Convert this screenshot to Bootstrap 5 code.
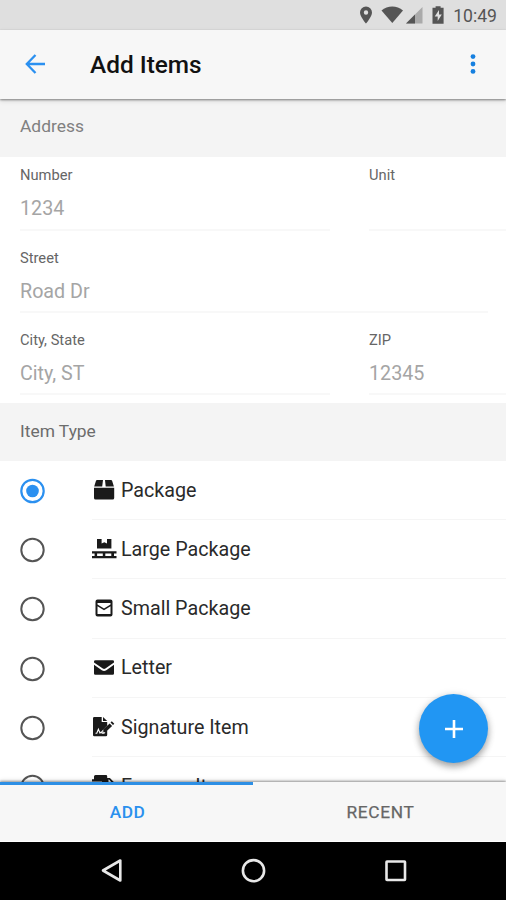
<!DOCTYPE html>
<html lang="en">
<head>
<meta charset="utf-8">
<meta name="viewport" content="width=device-width, initial-scale=1">
<title>Add Items</title>
<link href="https://cdn.jsdelivr.net/npm/bootstrap@5.3.0/dist/css/bootstrap.min.css" rel="stylesheet">
<style>
  body { font-family: Roboto, "Liberation Sans", sans-serif; color: #222; line-height: 1.2; }
  svg { display: block; flex: none; }
  .screen { height: 900px; }
  .status-bar { height: 30px; background: #dfdfdf; color: #555; font-size: 17.6px; padding: 3px 9px 0 0; }
  .status-bar svg { margin-top: -3px; }
  .app-bar { height: 69px; background: #f7f7f7; padding: 0 20px 2px 24px; box-shadow: 0 1px 2px rgba(0,0,0,.42), 0 2px 5px rgba(0,0,0,.12); z-index: 2; }
  .app-title { font-size: 24.4px; font-weight: 500; color: #111; margin-left: 43px; padding-top: 2px; }
  .section-head { height: 58px; background: #f4f4f4; color: #808080; font-size: 17.4px; padding: 0 20px 4px; }
  .section-head.type-head { color: #6c6c6c; padding-bottom: 1px; }
  .address-form { height: 246px; padding-left: 20px; }
  .field-row { height: 82px; }
  .field-box { height: 74px; border-bottom: 2px solid #f8f8f8; padding-top: 9px; }
  .field-row + .field-row .field-box { height: 73.500px; padding-top: 10px; }
  .field-box label { font-size: 14.7px; color: #666; line-height: 18px; display: block; }
  .field-box input { font-size: 19.7px; line-height: 24px; height: 24px; margin-top: 13px; }
  .field-box input::placeholder { color: #a5a5a5; opacity: 1; }
  .w-main { width: 310px; }
  .gap-fields { gap: 39px; }
  .w-street { width: 468px; }
  .item-row { height: 59.2px; padding-left: 20px; }
  .item-body { height: 59.2px; margin-left: 46px; border-bottom: 1.6px solid #f5f5f5; font-size: 19.7px; color: #2a2a2a; gap: 4px; }
  .item-row > svg { margin-top: 1px; }
  .item-body span { padding-top: 1px; }
  .tab-bar { height: 60px; background: #f7f7f7; font-size: 17.3px; font-weight: 500; letter-spacing: .5px; color: #666; box-shadow: 0 -1px 2px rgba(0,0,0,.35), 0 -2px 4px rgba(0,0,0,.1); z-index: 2; border-bottom: 1px solid #fff; }
  .tab-bar button { color: inherit; font: inherit; letter-spacing: inherit; padding: 0 0 0 2px; }
  .tab-bar .tab-on { color: #2a90ee; border-top: 3px solid #2d8fe5 !important; padding-bottom: 2px; }
  .tab-bar .tab-off { font-weight: 400; letter-spacing: .7px; padding-top: 1px; -webkit-text-stroke: .25px #666; }
  .sys-nav { height: 58px; background: #000; }
  .fab { right: 18px; bottom: 19px; width: 69px; height: 69px; background: #2196f3; box-shadow: 0 4px 7px rgba(0,0,0,.3), 0 1px 9px rgba(0,0,0,.13); }
</style>
</head>
<body class="bg-white">
<div class="screen d-flex flex-column overflow-hidden">
  <div class="status-bar d-flex align-items-center justify-content-end flex-shrink-0">
    <svg width="93" height="30" viewBox="0 0 93 30">
      <path fill="#555" fill-rule="evenodd" d="M6 6.500a6 6 0 0 1 6 6c0 4.300-6 11-6 11s-6-6.700-6-11a6 6 0 0 1 6-6zm0 3.800a2.200 2.200 0 1 0 0 4.400 2.200 2.200 0 0 0 0-4.400z"/>
      <path fill="#555" d="M21.500 10.500c6-5.200 15.500-5.200 21.500 0L32.300 23z"/>
      <path fill="#aaa" d="M46 23.500 62.500 7v16.500z"/>
      <path fill="#555" d="M46 23.500 55 14.500v9z"/>
      <path fill="#555" fill-rule="evenodd" d="M75.600 6.200h5v1.600h3v15.900H72.500V7.800h3.100zM79 10l-4.300 6.400h3V21l4.100-6.400H79z"/>
    </svg>
    <span>10:49</span>
  </div>

  <header class="app-bar d-flex align-items-center position-relative flex-shrink-0">
    <svg width="23" height="22" viewBox="0 0 23 22" fill="none" stroke="#2b90f0" stroke-width="2.300"><path d="M21 11H3M11.500 2 2.800 11l8.700 9"/></svg>
    <h1 class="app-title mb-0">Add Items</h1>
    <svg class="ms-auto" width="26" height="22" viewBox="0 0 26 22" fill="#1680e0"><circle cx="13" cy="3.600" r="2.400"/><circle cx="13" cy="11" r="2.400"/><circle cx="13" cy="18.400" r="2.400"/></svg>
  </header>

  <main class="flex-grow-1 overflow-hidden position-relative">
    <div class="section-head d-flex align-items-center">Address</div>
    <form class="address-form">
      <div class="field-row d-flex gap-fields">
        <div class="field-box w-main flex-shrink-0"><label for="num">Number</label><input id="num" class="form-control border-0 px-0 py-0 rounded-0" placeholder="1234"></div>
        <div class="field-box flex-grow-1"><label for="unit">Unit</label><input id="unit" class="form-control border-0 px-0 py-0 rounded-0"></div>
      </div>
      <div class="field-row">
        <div class="field-box w-street"><label for="street">Street</label><input id="street" class="form-control border-0 px-0 py-0 rounded-0" placeholder="Road Dr"></div>
      </div>
      <div class="field-row d-flex gap-fields">
        <div class="field-box w-main flex-shrink-0"><label for="city">City, State</label><input id="city" class="form-control border-0 px-0 py-0 rounded-0" placeholder="City, ST"></div>
        <div class="field-box flex-grow-1"><label for="zip">ZIP</label><input id="zip" class="form-control border-0 px-0 py-0 rounded-0" placeholder="12345"></div>
      </div>
    </form>
    <div class="section-head type-head d-flex align-items-center">Item Type</div>

    <div class="item-list">
      <div class="item-row d-flex align-items-center">
        <svg width="26" height="26" viewBox="0 0 26 26"><circle cx="12.500" cy="13" r="11.200" fill="none" stroke="#2b90f0" stroke-width="2.200"/><circle cx="12.500" cy="13" r="6.300" fill="#2b90f0"/></svg>
        <div class="item-body d-flex align-items-center flex-grow-1">
          <svg width="25" height="24" viewBox="0 0 25 24" fill="#1a1a1a"><path d="M5 2h6l-.8 6.500H2.200L4 2.700Q4.300 2 5 2zM13 2h6q.8 0 1.100.8l1.800 5.700h-8.200zM2 9.800h20.200V20q0 1.600-1.600 1.600h-17Q2 21.600 2 20z"/></svg>
          <span>Package</span>
        </div>
      </div>
      <div class="item-row d-flex align-items-center">
        <svg width="26" height="26" viewBox="0 0 26 26"><circle cx="12.500" cy="13" r="11.200" fill="none" stroke="#555" stroke-width="2"/></svg>
        <div class="item-body d-flex align-items-center flex-grow-1">
          <svg width="25" height="24" viewBox="0 0 25 24" fill="#1a1a1a"><path d="M5 2h4.600v4.600l2.700-1.300 2.700 1.300V2h4.400v9.500H5zM0 14.300h24.500v2.200H22v2.500h2.500v2.200H0V19h2.600v-2.500H0zm5.100 2.200V19h5.700v-2.500zm8.200 0V19h6v-2.500z" fill-rule="evenodd"/></svg>
          <span>Large Package</span>
        </div>
      </div>
      <div class="item-row d-flex align-items-center">
        <svg width="26" height="26" viewBox="0 0 26 26"><circle cx="12.500" cy="13" r="11.200" fill="none" stroke="#555" stroke-width="2"/></svg>
        <div class="item-body d-flex align-items-center flex-grow-1">
          <svg width="25" height="24" viewBox="0 0 25 24"><path fill="#1a1a1a" fill-rule="evenodd" d="M5.500 3.500h13q2 0 2 2v13q0 2-2 2h-13q-2 0-2-2v-13q0-2 2-2zM5.500 6.900v1.500l6.500 4 6.500-4V6.900zM5.500 10.300V18h13v-7.700l-6.500 4z"/></svg>
          <span>Small Package</span>
        </div>
      </div>
      <div class="item-row d-flex align-items-center">
        <svg width="26" height="26" viewBox="0 0 26 26"><circle cx="12.500" cy="13" r="11.200" fill="none" stroke="#555" stroke-width="2"/></svg>
        <div class="item-body d-flex align-items-center flex-grow-1">
          <svg width="25" height="24" viewBox="0 0 25 24" fill="#1a1a1a"><path d="M3.500 4.200h17.200q1.300 0 1.300 1.300v.9l-8.600 6.200q-1.300.8-2.600 0L2 6.400v-.9q0-1.300 1.500-1.300zM2 8.700l7.800 5.600q2.300 1.400 4.500 0L22 8.700v8.800q0 1.300-1.300 1.300H3.300Q2 18.800 2 17.500z"/></svg>
          <span>Letter</span>
        </div>
      </div>
      <div class="item-row d-flex align-items-center">
        <svg width="26" height="26" viewBox="0 0 26 26"><circle cx="12.500" cy="13" r="11.200" fill="none" stroke="#555" stroke-width="2"/></svg>
        <div class="item-body d-flex align-items-center flex-grow-1">
          <svg width="25" height="24" viewBox="0 0 25 24"><path fill="#1a1a1a" d="M2.300 2h7.400v5h5.500v3.500l-5 5v2.300h2.500l2.500-2.400v4.500q0 1.300-1.300 1.300H2.300Q1 21.200 1 19.900V3.300Q1 2 2.300 2zM11 2l4.200 4H11zM19.800 6.300l2.500 2.500-1.300 1.300-2.500-2.500zM17.600 8.500l2.500 2.500-6.300 6h-2.500v-2.500z"/><path d="M3.500 18.300h1.300l1.600-4 1.600 3.800 1.300-1.200.8 1.400h2.500" fill="none" stroke="#fff" stroke-width="1.100"/></svg>
          <span>Signature Item</span>
        </div>
      </div>
      <div class="item-row d-flex align-items-center">
        <svg width="26" height="26" viewBox="0 0 26 26"><circle cx="12.500" cy="13" r="11.200" fill="none" stroke="#555" stroke-width="2"/></svg>
        <div class="item-body d-flex align-items-center flex-grow-1">
          <svg width="25" height="24" viewBox="0 0 25 24" fill="#1a1a1a"><path d="M3.500 1H14q1.200 0 1.200 1.200v1.800h2.700L22 8.200v9H2V11.500h8v-1.300H1V8.700h9V7.500H0V5.300h2V2.500Q2 1 3.500 1zM16.500 5.500v3h3.200l-2.700-3z" fill-rule="evenodd"/><circle cx="6.500" cy="18.500" r="3"/><circle cx="18" cy="18.500" r="3"/></svg>
          <span>Express Item</span>
        </div>
      </div>
    </div>

    <button class="fab btn rounded-circle border-0 p-0 position-absolute d-flex align-items-center justify-content-center" type="button" aria-label="Add">
      <svg width="18" height="18" viewBox="0 0 18 18" stroke="#fff" stroke-width="2.600"><path d="M9 0v18M0 9h18"/></svg>
    </button>
  </main>

  <nav class="tab-bar d-flex position-relative flex-shrink-0">
    <button type="button" class="tab-on w-50 bg-transparent border-0">ADD</button>
    <button type="button" class="tab-off w-50 bg-transparent border-0">RECENT</button>
  </nav>

  <div class="sys-nav d-flex align-items-center justify-content-center flex-shrink-0">
    <svg width="310" height="30" viewBox="0 0 310 30" fill="none" stroke="#e8e8e8" stroke-width="2.600"><path stroke-linejoin="round" d="M22.300 4.500v20L5 14.500z"/><circle cx="155.500" cy="14.700" r="10.600"/><rect x="288.500" y="5.500" width="18.500" height="18.500" rx=".5"/></svg>
  </div>
</div>
<script src="https://cdn.jsdelivr.net/npm/bootstrap@5.3.0/dist/js/bootstrap.bundle.min.js"></script>
</body>
</html>
